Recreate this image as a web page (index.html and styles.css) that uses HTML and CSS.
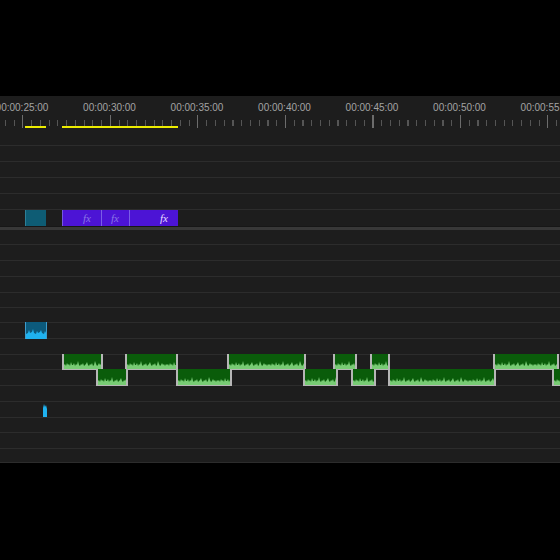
FILE: index.html
```html
<!DOCTYPE html>
<html lang="en">
<head>
    <meta charset="UTF-8">
    <title>Timeline</title>
    <link rel="stylesheet" href="styles.css">
</head>
<body>
    <!-- shared waveform patterns -->
    <svg class="defs" width="0" height="0">
        <defs>
            <pattern id="gwave" width="40" height="10" patternUnits="userSpaceOnUse">
                <polygon fill="#78cc74" points="0,10 0,6 1,5 2,7 3,4 4,6 5,5 6,7 7,3 8,6 9,6 10,4 11,7 12,5 13,6 14,2 15,6 16,7 17,5 18,6 19,4 20,7 21,6 22,5 23,3 24,6 25,7 26,5 27,6 28,4 29,7 30,6 31,2 32,5 33,7 34,6 35,4 36,6 37,5 38,7 39,5 40,6 40,10"/>
            </pattern>
            <pattern id="bwave" width="22" height="10" patternUnits="userSpaceOnUse">
                <polygon fill="#1fb2ef" points="0,10 0,5 2,4 3,1 4,4 6,3 7,0 8,4 10,5 11,2 12,4 14,3 15,1 16,4 18,5 19,2 20,4 22,5 22,10"/>
            </pattern>
        </defs>
    </svg>

    <div class="panel">
        <div class="ruler">
            <div class="labels">
                <span class="tc">00:00:25:00</span>
                <span class="tc">00:00:30:00</span>
                <span class="tc">00:00:35:00</span>
                <span class="tc">00:00:40:00</span>
                <span class="tc">00:00:45:00</span>
                <span class="tc">00:00:50:00</span>
                <span class="tc">00:00:55:00</span>
            </div>
            <div class="ticks"></div>
            <div class="mark" style="left:25px;width:21px"></div>
            <div class="mark" style="left:62px;width:116px"></div>
        </div>

        <div class="video">
            <div class="row"></div>
            <div class="row"></div>
            <div class="row"></div>
            <div class="row"></div>
            <div class="row"></div>
            <div class="row last">
                <div class="vclip teal" style="left:25px;width:21px"></div>
                <div class="vclip purple" style="left:62px;width:116px">
                    <div class="seg" style="width:38px"><i>fx</i></div>
                    <div class="seg" style="width:28px"><i>fx</i></div>
                    <div class="seg on"><i>fx</i></div>
                </div>
            </div>
        </div>

        <div class="sep"></div>

        <div class="audio">
            <div class="row"></div>
            <div class="row"></div>
            <div class="row"></div>
            <div class="row"></div>
            <div class="row"></div>
            <div class="row"></div>
            <div class="row">
                <div class="aclip blue" style="left:25px;width:22px">
                    <svg class="wave"><rect width="100%" height="100%" fill="url(#bwave)"/></svg>
                </div>
            </div>
            <div class="row"></div>
            <div class="row">
                <div class="aclip green" style="left:62px;width:41px"><svg class="wave"><rect width="100%" height="100%" fill="url(#gwave)"/></svg></div>
                <div class="aclip green" style="left:125px;width:53px"><svg class="wave"><rect x="-13" width="200%" height="100%" fill="url(#gwave)"/></svg></div>
                <div class="aclip green" style="left:227px;width:79px"><svg class="wave"><rect width="100%" height="100%" fill="url(#gwave)"/></svg></div>
                <div class="aclip green" style="left:333px;width:24px"><svg class="wave"><rect x="-7" width="200%" height="100%" fill="url(#gwave)"/></svg></div>
                <div class="aclip green" style="left:370px;width:20px"><svg class="wave"><rect x="-22" width="300%" height="100%" fill="url(#gwave)"/></svg></div>
                <div class="aclip green" style="left:493px;width:66px"><svg class="wave"><rect x="-5" width="200%" height="100%" fill="url(#gwave)"/></svg></div>
            </div>
            <div class="row">
                <div class="aclip green" style="left:96px;width:32px"><svg class="wave"><rect x="-17" width="200%" height="100%" fill="url(#gwave)"/></svg></div>
                <div class="aclip green" style="left:176px;width:56px"><svg class="wave"><rect x="-9" width="200%" height="100%" fill="url(#gwave)"/></svg></div>
                <div class="aclip green" style="left:303px;width:35px"><svg class="wave"><rect x="-26" width="300%" height="100%" fill="url(#gwave)"/></svg></div>
                <div class="aclip green" style="left:351px;width:25px"><svg class="wave"><rect x="-3" width="200%" height="100%" fill="url(#gwave)"/></svg></div>
                <div class="aclip green" style="left:388px;width:108px"><svg class="wave"><rect x="-11" width="200%" height="100%" fill="url(#gwave)"/></svg></div>
                <div class="aclip green" style="left:552px;width:10px"><svg class="wave"><rect width="100%" height="100%" fill="url(#gwave)"/></svg></div>
            </div>
            <div class="row"></div>
            <div class="row">
                <div class="aclip thin" style="left:43px;width:4px">
                    <svg class="spike" viewBox="0 0 4 14" preserveAspectRatio="none"><polygon fill="#1fb2ef" points="0,14 0,5 1,1 2,4 3,2 4,6 4,14"/></svg>
                </div>
            </div>
            <div class="row"></div>
            <div class="row"></div>
            <div class="row"></div>
        </div>
    </div>
</body>
</html>
```

FILE: styles.css
```css
* {
    margin: 0;
    padding: 0;
    box-sizing: border-box;
}
body {
    background-color: #000;
    font-family: "Liberation Sans", Arial, sans-serif;
    overflow: hidden;
}
.defs {
    position: absolute;
}
.panel {
    margin-top: 96px;
    width: 560px;
    height: 367px;
    background-color: #1d1d1d;
    overflow: hidden;
}

/* ruler */
.ruler {
    position: relative;
    height: 34px;
    padding-top: 6px;
}
.labels {
    display: flex;
    margin-left: -21.75px;
    height: 12px;
    line-height: 12px;
    font-size: 10px;
    color: #a3a3a3;
    white-space: nowrap;
}
.tc {
    flex: 0 0 87.5px;
    text-align: center;
}
.ticks {
    margin-top: 1px;
    margin-left: -65.5px;
    width: calc(100% + 65.5px);
    height: 13px;
    background-image:
        repeating-linear-gradient(to right, #6c6c6c 0 1px, transparent 1px 87.5px),
        repeating-linear-gradient(to right, #555 0 1px, transparent 1px 8.75px);
    background-size: 100% 13px, 100% 6px;
    background-position: 0 0, 0 5px;
    background-repeat: no-repeat;
}
.mark {
    position: absolute;
    top: 30px;
    height: 2px;
    background-color: #ecec00;
}

/* tracks */
.row {
    position: relative;
    border-bottom: 1px solid #2c2c2c;
}
.video .row {
    height: 16px;
}
.video .row.last {
    border-bottom: none;
}
.sep {
    height: 4px;
    border-top: 1px solid #171717;
    background-color: #383838;
}
.audio {
    display: grid;
    height: 233px;
    grid-template-rows: 15px 16px 16px 16px 15px 15px 16px 16px 15px 16px 16px 16px 15px 16px 14px;
}

/* video clips */
.vclip {
    position: absolute;
    top: 0;
    height: 16px;
}
.teal {
    background-color: #0e5c74;
    border-left: 1px solid #2d7f97;
}
.purple {
    display: flex;
    background-color: #4c14d5;
    border-left: 1px solid #7458e0;
}
.seg {
    display: flex;
    align-items: center;
    justify-content: flex-end;
    padding-right: 10px;
    height: 100%;
    border-left: 1px solid #7a5ee6;
}
.seg:first-child {
    border-left: none;
}
.seg.on {
    flex: 1;
}
.seg i {
    font-family: "Liberation Serif", "Times New Roman", serif;
    font-size: 11px;
    color: #8b76e6;
}
.seg.on i {
    color: #e6deff;
}

/* audio clips */
.aclip {
    position: absolute;
    top: -1px;
    bottom: -1px;
}
.green {
    background-color: #0a5c0a;
    border: 2px solid #b6b6b6;
    border-top: none;
    border-bottom-width: 1px;
}
.blue {
    background-color: #0c5a7c;
    border-left: 1px solid #3d9ccc;
    border-right: 1px solid #3d9ccc;
}
.wave {
    position: absolute;
    left: 0;
    bottom: 0;
    width: 100%;
    height: 10px;
}
.spike {
    position: absolute;
    left: 0;
    bottom: 1px;
    width: 100%;
    height: 14px;
}
```
